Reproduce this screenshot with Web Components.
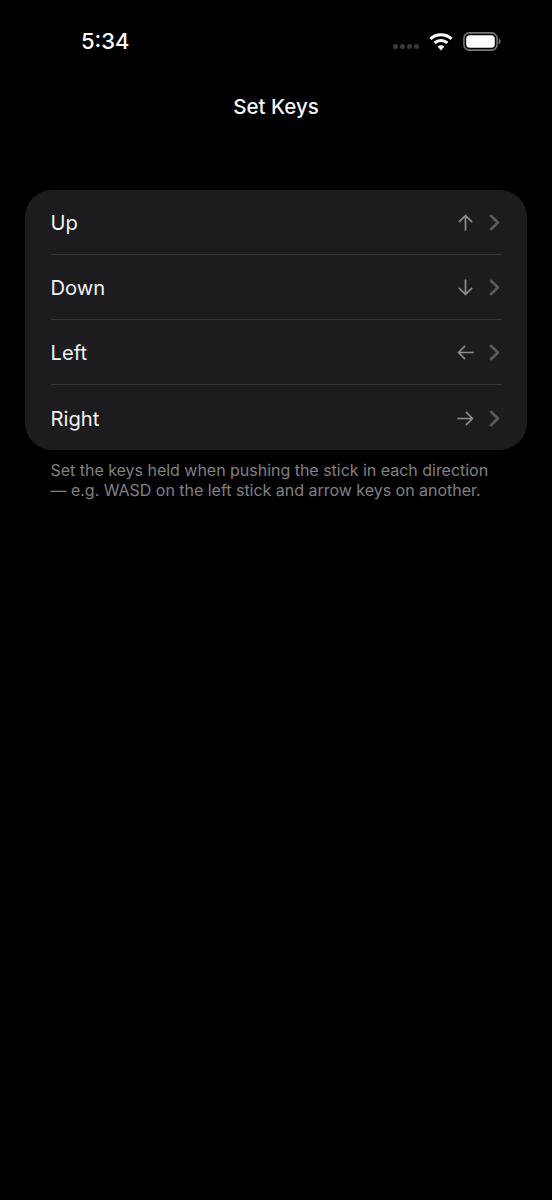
<!DOCTYPE html>
<html>
<head>
<meta charset="utf-8">
<title>Set Keys</title>
<style>
  html, body { margin: 0; background: #000; }
  body { font-family: 'Inter', 'Liberation Sans', sans-serif; color: #fff; }
</style>
</head>
<body>
<key-screen>
  <status-bar time="5:34"></status-bar>
  <nav-title>Set Keys</nav-title>
  <key-list>
    <key-row label="Up" dir="up"></key-row>
    <key-row label="Down" dir="down"></key-row>
    <key-row label="Left" dir="left"></key-row>
    <key-row label="Right" dir="right"></key-row>
  </key-list>
  <list-note>Set the keys held when pushing the stick in each direction<br>— e.g. WASD on the left stick and arrow keys on another.</list-note>
</key-screen>

<script>
class KeyScreen extends HTMLElement {
  constructor() {
    super();
    this.attachShadow({ mode: "open" });
    this.shadowRoot.innerHTML = `
      <style>
        :host { display:block; width:552px; height:1200px; background:#000; overflow:hidden; }
      </style>
      <slot></slot>`;
  }
}

class StatusBar extends HTMLElement {
  constructor() {
    super();
    this.attachShadow({ mode: "open" });
    this.shadowRoot.innerHTML = `
      <style>
        :host { display:flex; align-items:center; justify-content:space-between; height:82px; padding:0 51px 0 81px; box-sizing:border-box; }
        .time { font-size:22px; font-weight:500; color:#fff; }
        .icons { display:flex; align-items:center; gap:10px; }
        .dots { display:flex; gap:2px; margin-top:11px; }
        .dots i { width:5px; height:5px; border-radius:50%; background:#3a3a3a; display:block; }
        svg { display:block; }
      </style>
      <div class="time"></div>
      <div class="icons">
        <div class="dots"><i></i><i></i><i></i><i></i></div>
        <svg width="24" height="19" viewBox="0 0 24 19">
          <path d="M1.5 6.8 C7.4 1.4 16.6 1.4 22.5 6.8" fill="none" stroke="#fff" stroke-width="3.1"/>
          <path d="M5.6 10.9 C9.3 7.6 14.7 7.6 18.4 10.9" fill="none" stroke="#fff" stroke-width="3.1"/>
          <path d="M8.6 14.4 C10.6 12.8 13.4 12.8 15.4 14.4 L12 18.4 Z" fill="#fff"/>
        </svg>
        <svg width="38" height="19" viewBox="0 0 38 19">
          <rect x=".9" y=".9" width="33.2" height="17.2" rx="5.6" fill="none" stroke="#777" stroke-width="1.6"/>
          <rect x="3.2" y="3.2" width="28.6" height="12.6" rx="3.6" fill="#fff"/>
          <path d="M35.8 6.5 C37 7 37.6 8.2 37.6 9.5 C37.6 10.8 37 12 35.8 12.5 Z" fill="#777"/>
        </svg>
      </div>`;
  }
  connectedCallback() {
    this.shadowRoot.querySelector(".time").textContent = this.getAttribute("time");
  }
}

class NavTitle extends HTMLElement {
  constructor() {
    super();
    this.attachShadow({ mode: "open" });
    this.shadowRoot.innerHTML = `
      <style>
        :host { display:block; text-align:center; font-size:20.5px; font-weight:500; line-height:50px; color:#f6f6f6; height:108px; }
      </style>
      <slot></slot>`;
  }
}

class KeyList extends HTMLElement {
  constructor() {
    super();
    this.attachShadow({ mode: "open" });
    this.shadowRoot.innerHTML = `
      <style>
        :host { display:block; margin:0 25px; background:#1c1c1e; border-radius:27px; overflow:hidden; padding-left:26px; padding-right:25px; }
      </style>
      <slot></slot>`;
  }
}

const ARROWS = {
  up: "M8.5 16 V1.5 M2.4 7.6 L8.5 1.5 L14.6 7.6",
  down: "M8.5 1 V15.5 M2.4 9.4 L8.5 15.5 L14.6 9.4",
  left: "M16 8.5 H1.5 M7.6 2.4 L1.5 8.5 L7.6 14.6",
  right: "M1 8.5 H15.5 M9.4 2.4 L15.5 8.5 L9.4 14.6"
};

class KeyRow extends HTMLElement {
  constructor() {
    super();
    this.attachShadow({ mode: "open" });
    this.shadowRoot.innerHTML = `
      <style>
        :host { display:flex; align-items:center; height:65.15px; box-sizing:border-box; border-bottom:1px solid #38383a; }
        :host(:last-child) { border-bottom:none; height:64.55px; }
        :host(:last-child) .side { padding-top:1px; }
        .label { flex:1; font-size:20.2px; color:#f2f2f2; padding-top:1px; margin-left:-.5px; }
        .side { display:flex; align-items:center; }
        .arrow { display:block; width:17px; height:17px; margin-right:15px; }
        .arrow path { fill:none; stroke:#8e8e90; stroke-width:1.7; stroke-linecap:round; stroke-linejoin:round; }
        .chev { display:block; width:11px; height:17px; margin-right:2px; }
        .chev path { fill:none; stroke:#5b5b5e; stroke-width:2.6; stroke-linecap:round; stroke-linejoin:round; }
      </style>
      <div class="label"></div>
      <div class="side">
        <svg class="arrow" viewBox="0 0 17 17"><path></path></svg>
        <svg class="chev" viewBox="0 0 11 17"><path d="M2 1.8 L8.8 8.5 L2 15.2"></path></svg>
      </div>`;
  }
  connectedCallback() {
    this.shadowRoot.querySelector(".label").textContent = this.getAttribute("label");
    this.shadowRoot.querySelector(".arrow path").setAttribute("d", ARROWS[this.getAttribute("dir")]);
  }
}

class ListNote extends HTMLElement {
  constructor() {
    super();
    this.attachShadow({ mode: "open" });
    this.shadowRoot.innerHTML = `
      <style>
        :host { display:block; margin:10px 30px 0 50.5px; font-size:16px; line-height:20px; letter-spacing:-.02px; color:#808082; white-space:nowrap; }
      </style>
      <slot></slot>`;
  }
}

customElements.define("key-screen", KeyScreen);
customElements.define("status-bar", StatusBar);
customElements.define("nav-title", NavTitle);
customElements.define("key-list", KeyList);
customElements.define("key-row", KeyRow);
customElements.define("list-note", ListNote);
</script>
</body>
</html>
